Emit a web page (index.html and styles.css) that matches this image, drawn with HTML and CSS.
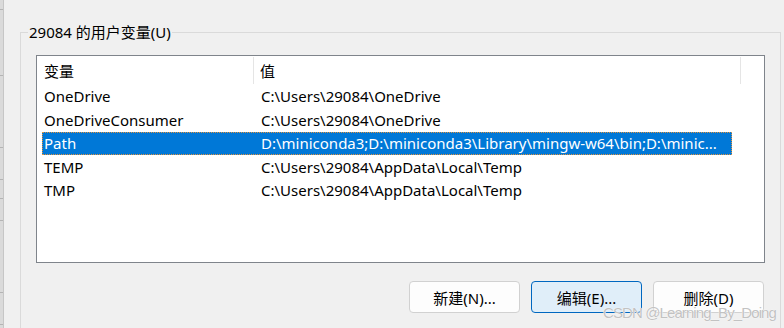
FILE: index.html
```html
<!DOCTYPE html>
<html lang="zh-CN">
<head>
<meta charset="utf-8">
<title>用户变量</title>
<link rel="stylesheet" href="styles.css">
</head>
<body>
<div class="window">
  <div class="strip">
    <div class="seg s1"></div>
    <div class="seg s2"></div>
    <div class="seg s3"></div>
    <div class="seg s4"></div>
    <div class="seg s5"></div>
    <div class="seg s6"></div>
    <div class="seg s7"></div>
    <div class="seg s8"></div>
  </div>
  <fieldset class="group">
    <legend class="group-label">29084 的用户变量(U)</legend>
    <div class="listbox">
      <div class="header">
        <div class="hcell col-name">变量</div>
        <div class="hcell col-value">值</div>
        <div class="hcell col-rest"></div>
      </div>
      <div class="row"><div class="cell col-name">OneDrive</div><div class="cell col-value">C:\Users\29084\OneDrive</div></div>
      <div class="row"><div class="cell col-name">OneDriveConsumer</div><div class="cell col-value">C:\Users\29084\OneDrive</div></div>
      <div class="row selected"><div class="cell col-name">Path</div><div class="cell col-value">D:\miniconda3;D:\miniconda3\Library\mingw-w64\bin;D:\minic...</div></div>
      <div class="row"><div class="cell col-name">TEMP</div><div class="cell col-value">C:\Users\29084\AppData\Local\Temp</div></div>
      <div class="row"><div class="cell col-name">TMP</div><div class="cell col-value">C:\Users\29084\AppData\Local\Temp</div></div>
    </div>
    <div class="buttons">
      <button class="btn">新建(N)...</button>
      <button class="btn btn-focus">编辑(E)...</button>
      <button class="btn">删除(D)</button>
    </div>
  </fieldset>
  <div class="watermark">CSDN @Learning_By_Doing</div>
</div>
</body>
</html>
```
FILE: styles.css
```css
html, body {
  margin: 0;
  padding: 0;
  background: #f0f0f0;
  overflow: hidden;
}
body {
  width: 784px;
  height: 328px;
  font-family: "Noto Sans", "Noto Sans CJK SC", sans-serif;
  font-size: 15px;
  color: #000;
}
.window {
  position: relative;
  display: flex;
  width: 784px;
  height: 328px;
  overflow: hidden;
}
.strip {
  width: 3px;
  flex: none;
  background: #dadada;
  border-right: 1px solid #c6c6c6;
  display: flex;
  flex-direction: column;
}
.seg { border-bottom: 1px solid #b4b4b4; flex: none; }
.s1 { height: 9px; }
.s2 { height: 65px; }
.s3 { height: 71px; }
.s4 { height: 31px; }
.s5 { height: 18px; }
.s6 { height: 21px; }
.s7 { height: 71px; }
.s8 { height: 31px; }

.group {
  margin: 22px 3px 0 16px;
  padding: 0 15px 0 15px;
  border: 1px solid #dadada;
  border-bottom: none;
  flex: 1;
  min-width: 0;
  height: 306px;
  box-sizing: border-box;
}
.group-label {
  margin-left: -8px;
  padding: 0 1px;
  height: 21px;
  line-height: 21px;
  font-size: 15px;
}
.listbox {
  margin-top: 12px;
  height: 208px;
  box-sizing: border-box;
  border: 1px solid #7f848b;
  background: #fff;
}
.header {
  display: flex;
  height: 28.5px;
  align-items: stretch;
}
.hcell {
  display: flex;
  align-items: center;
  padding-left: 7px;
  box-sizing: border-box;
}
.header .col-name {
  width: 217px;
  border-right: 1px solid #e5e5e5;
  margin: 1px 0 1px 0;
}
.header .col-value {
  width: 487px;
  border-right: 1px solid #e5e5e5;
  margin: 1px 0 1px 0;
  padding-left: 6px;
}
.row {
  display: flex;
  height: 23.5px;
  align-items: center;
  margin-left: 5px;
  width: 690px;
  box-sizing: border-box;
}
.cell {
  white-space: nowrap;
  overflow: hidden;
}
.row .col-name {
  width: 212px;
  padding-left: 2px;
  box-sizing: border-box;
}
.row .col-value {
  padding-left: 7px;
}
.row.selected {
  background: #0078d7;
  color: #fff;
  outline: 1px dotted #e0943f;
  outline-offset: -1px;
}

.buttons {
  display: flex;
  justify-content: flex-end;
  gap: 11px;
  margin-top: 18px;
  padding-right: 1px;
}
.btn {
  width: 111px;
  height: 32px;
  box-sizing: border-box;
  border: 1px solid #d1d1d1;
  border-radius: 4px;
  background: #fdfdfd;
  font-family: "Noto Sans", "Noto Sans CJK SC", sans-serif;
  font-size: 15px;
  color: #000;
  padding: 0;
}
.btn-focus {
  background: #e0eef9;
  border-color: #0067c0;
}
.watermark {
  position: absolute;
  left: 603px;
  top: 304px;
  font-family: "Liberation Sans", sans-serif;
  font-size: 15px;
  letter-spacing: -0.9px;
  color: #c2c2c2;
  white-space: nowrap;
  text-shadow: 0 0 1px #fff, 0 0 1px #fff;
}
```
